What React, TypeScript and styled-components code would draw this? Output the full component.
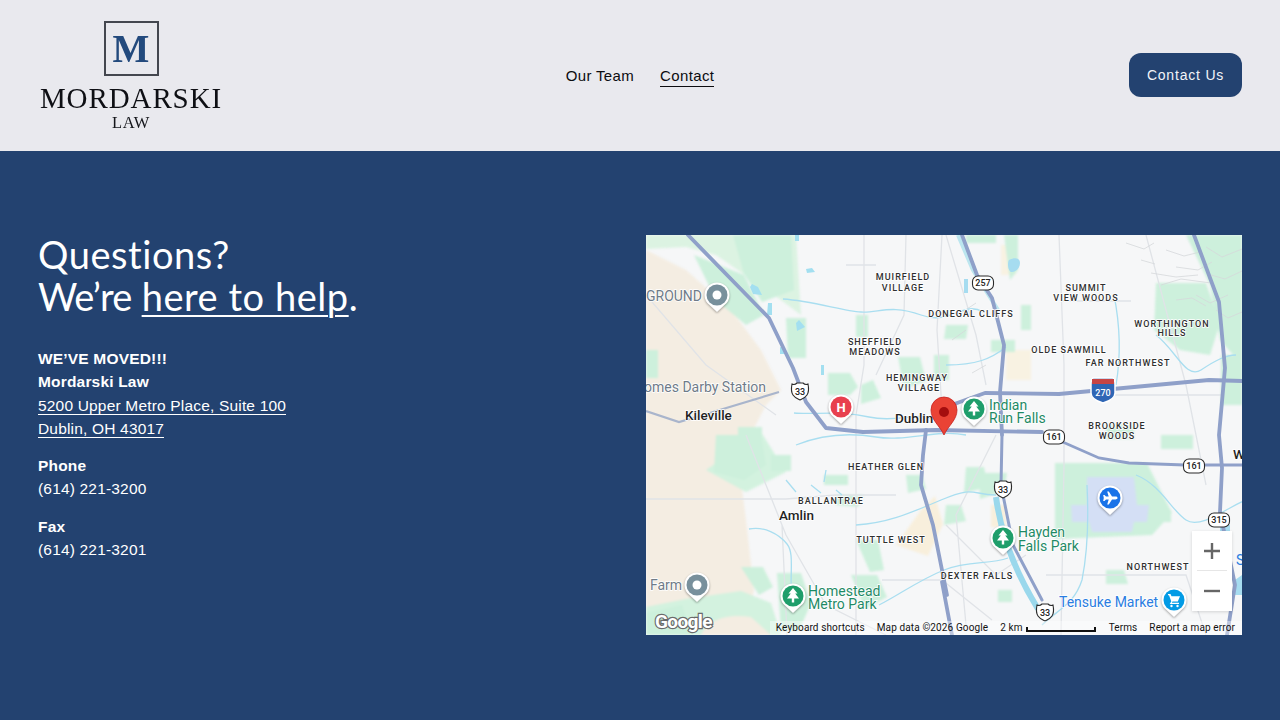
import React from "react";
import styled, { createGlobalStyle } from "styled-components";

const Global = createGlobalStyle`
  html, body { margin: 0; padding: 0; background: #234270; }
  body { font-family: "Liberation Sans", Arial, sans-serif; overflow: hidden; }
  #root { width: 1280px; height: 720px; }
`;

const Page = styled.div`
  width: 1280px;
  height: 720px;
  display: flex;
  flex-direction: column;
  background: #234270;
`;
const Header = styled.header`
  height: 151px;
  box-sizing: border-box;
  padding: 0 38px;
  background: #e9e9ee;
  display: grid;
  grid-template-columns: 1fr auto 1fr;
  align-items: center;
`;
const Logo = styled.a`
  width: 186px;
  display: flex;
  flex-direction: column;
  align-items: center;
  filter: blur(0.4px);
`;
const LogoBox = styled.div`
  width: 55px;
  height: 55px;
  box-sizing: border-box;
  border: 2px solid #44474f;
  display: flex;
  align-items: center;
  justify-content: center;
  font: 700 39px/1 "Liberation Serif", serif;
  color: #234a7d;
`;
const LogoName = styled.div`
  margin-top: 7px;
  font: 400 29px/30px "Liberation Serif", serif;
  letter-spacing: 0.9px;
  color: #0e0f14;
  white-space: nowrap;
`;
const LogoSub = styled.div`
  margin-top: 1px;
  font: 400 16.5px/17px "Liberation Serif", serif;
  letter-spacing: 0.6px;
  color: #14151a;
`;
const Nav = styled.nav`
  display: flex;
  gap: 26px;
  align-items: center;
  margin-top: 2px;
`;
const NavLink = styled.a<{ $active?: boolean }>`
  font-size: 15px;
  line-height: 20px;
  letter-spacing: 0.35px;
  color: #0c0c10;
  border-bottom: 1px solid ${(p) => (p.$active ? "#0c0c10" : "transparent")};
`;
const ContactButton = styled.a`
  justify-self: end;
  width: 113px;
  height: 44px;
  margin-bottom: 2px;
  display: flex;
  align-items: center;
  justify-content: center;
  border-radius: 12px;
  background: #234270;
  color: #f2f4f8;
  font-size: 14px;
  letter-spacing: 0.8px;
`;
const Main = styled.main`
  flex: 1;
  padding: 84px 38px 0;
  display: flex;
  justify-content: space-between;
  align-items: flex-start;
`;
const Info = styled.section`
  color: #fff;
`;
const Heading = styled.h1`
  margin: -2px 0 30px;
  font: 400 38px/42px Lato, sans-serif;
  letter-spacing: 0.55px;
  color: #fff;
`;
const Contraction = styled.span`
  letter-spacing: -0.9px;
`;
const HeadingLink = styled.a`
  text-decoration: underline;
  text-decoration-thickness: 2px;
  text-underline-offset: 4px;
`;
const Block = styled.p`
  margin: 0 0 14px;
  font-size: 15.5px;
  line-height: 23.3px;
  letter-spacing: 0.18px;
`;
const Strong = styled.strong`
  font-weight: 700;
  display: block;
`;
const Address = styled.a`
  color: #fff;
  border-bottom: 1px solid #fff;
`;
const MapFrame = styled.div`
  position: relative;
  width: 596px;
  height: 400px;
  overflow: hidden;
  background: #f6f7f8;
`;
const MapArt = styled.svg`
  display: block;
`;
const SoftLayer = styled.g`
  filter: blur(1.2px);
`;
const PinShape = styled.path`
  filter: drop-shadow(0 1px 1px rgba(0, 0, 0, 0.35));
`;
const Zoom = styled.div`
  position: absolute;
  left: 546px;
  top: 296px;
  width: 40px;
  height: 80px;
  background: #fff;
  display: flex;
  flex-direction: column;
  align-items: center;
  box-shadow: 0 1px 3px rgba(0, 0, 0, 0.15);
`;
const ZoomKey = styled.div<{ $h: number }>`
  height: ${(p) => p.$h}px;
  width: 100%;
  display: flex;
  align-items: center;
  justify-content: center;
`;
const ZoomRule = styled.div`
  width: 30px;
  height: 1px;
  background: #e6e6e6;
`;
const Attribution = styled.div`
  position: absolute;
  right: 0;
  bottom: 0;
  height: 14px;
  padding: 0 7px 0 6px;
  display: flex;
  align-items: center;
  font: 400 10px/14px Roboto, sans-serif;
  letter-spacing: 0.12px;
  color: #111;
  white-space: nowrap;
  background: rgba(255, 255, 255, 0.4);
`;
const AttrItem = styled.span<{ $gap: number }>`
  margin-right: ${(p) => p.$gap}px;
`;
const Scale = styled.span`
  width: 66px;
  height: 3px;
  margin: 0 13px 0 3px;
  border: 2px solid #111;
  border-top: 0;
  position: relative;
  top: 1px;
`;

const Shield = ({ x, y, t, w = 21 }: { x: number; y: number; t: string; w?: number }) => (
  <g>
    <rect x={x - w / 2} y={y - 7} width={w} height={14} rx={5.5} fill="#fff" stroke="#2b2b2b" strokeWidth={1.1} />
    <text x={x} y={y + 3.2} textAnchor="middle" fontFamily="Roboto" fontSize="9" fontWeight="500" fill="#222">{t}</text>
  </g>
);
const UsShield = ({ x, y }: { x: number; y: number }) => (
  <g>
    <path d={`M${x - 8} ${y - 7}c2 1 3 1 5-1h6c2 2 3 2 5 1 1 5 1 8-1 11-2 3-5 4-7 5-2-1-5-2-7-5-2-3-2-6-1-11z`} fill="#fff" stroke="#2b2b2b" strokeWidth={1.1} />
    <text x={x} y={y + 4} textAnchor="middle" fontFamily="Roboto" fontSize="9" fontWeight="500" fill="#222">33</text>
  </g>
);
const Pin = ({ x, y, c, children }: { x: number; y: number; c: string; children?: React.ReactNode }) => (
  <g transform={`translate(${x} ${y})`}>
    <PinShape d="M0 17 L-8 9.5 A12.5 12.5 0 1 1 8 9.5 Z" fill="#fff" />
    <circle r={10.5} fill={c} />
    {children}
  </g>
);
const Tree = () => <path d="M0-8l4.500 5.500H2.200l3.800 5H1.200V6.500h-2.400V2.500H-6l3.800-5h-2.300z" fill="#fff" />;

const labels: [number, number, string][] = [
  [257, 45, "MUIRFIELD"], [257, 56, "VILLAGE"], [325, 82, "DONEGAL CLIFFS"],
  [229, 110, "SHEFFIELD"], [229, 120, "MEADOWS"], [271, 146, "HEMINGWAY"], [273, 156, "VILLAGE"],
  [440, 56, "SUMMIT"], [440, 66, "VIEW WOODS"], [526, 92, "WORTHINGTON"], [526, 101, "HILLS"],
  [423, 118, "OLDE SAWMILL"], [482, 131, "FAR NORTHWEST"], [471, 194, "BROOKSIDE"], [471, 204, "WOODS"],
  [240, 235, "HEATHER GLEN"], [185, 269, "BALLANTRAE"], [245, 308, "TUTTLE WEST"],
  [331, 344, "DEXTER FALLS"], [512, 335, "NORTHWEST"],
];
const greens: string[] = [
  "M87 0h58l3 55-32 12-18-28z",
  "M140 83h20v40h-18z",
  "M48 20l50 20 20 40-18 10-30-25z",
  "M0 115h12v28H0z",
  "M182 138h22l8 14-8 8h-22z",
  "M215 150l12-5 8 18-20 6z",
  "M210 80h12v22h-12z",
  "M252 122h22l6 24-22 8z",
  "M300 90h22l-2 14h-22z",
  "M288 120h15v25h-15z",
  "M345 105h24v12h-24z",
  "M320 0h30v8h-30z",
  "M375 70h10v25h-10z",
  "M358 0h14v35l-8 10z",
  "M510 48h50l14 40-10 32-30-5-26-20z",
  "M540 0h56v130l-22-25-10-55z",
  "M575 120h21v50h-21z",
  "M70 200h45l5 30-22 15-30-8z",
  "M92 200h24v-8H92z",
  "M131 338h24l10 30-12 28h-18z",
  "M210 305h22l6 30-14 2z",
  "M0 378l36-8 10 30H0z",
  "M95 332h22l10 20-14 8z",
  "M205 340h26l10 22-22 12z",
  "M320 232h18l4 20-24 6zM300 270h15l5 16-22 4z",
  "M333 238h28l-3 18-24 8z",
  "M409 228h92l25 50-20 22-97 4z",
  "M515 200h32v14h-32z",
  "M505 275h20v12h-20z",
  "M260 240h16l4 14-18 4z",
  "M125 220h20v16h-20z",
  "M178 240h24v10h-24z",
  "M190 260h28l-6 12-22-2z",
  "M460 190h28v14h-28z",
  "M460 335h18l4 14h-22z",
  "M352 355h14v12h-14z",
];
const waters: string[] = [
  "M137 64c30 2 60 12 78 13s30-8 60 3 42-15 62-3",
  "M148 178c20 2 45-3 75 4s50-8 70 5",
  "M150 210c25-10 50-13 80-8s60-8 90-2",
  "M103 294c15-3 30 5 38 15s2 30 5 60",
  "M210 290c30-2 50-10 85-25s30-5 55-5",
  "M233 370c20-10 40-25 65-35s45-5 64-12",
  "M468 60c5 25 8 55 2 90",
  "M441 250c2 40 0 70-5 95-8 25-25 30-40 45",
  "M490 240c25 10 35 35 50 45s45-15 60-20",
  "M510 100c20 15 30 45 45 35s25-15 35-15",
  "M300 130c30 0 45-6 60-18",
  "M165 250l10 8M140 245l10 12M180 235l-2 12M190 255l6 5",
];
const hills: string[] = [
  "M520 15l18 6 16-4", "M530 32l22 3 14-8", "M505 38l25 4 22-2", "M515 50l20-6 30 4", "M560 12l16 10 20-8",
  "M565 40l14 4 17-8", "M550 60l14 8 18-8", "M530 65l16-2 14 8", "M570 75l12 8 14-6", "M540 85l14 6 10-4",
  "M480 8l18 6 10-6", "M330 68l-18 12", "M320 95l-14 10", "M340 130l-14 8", "M495 25l14 4",
];

const App = () => (
  <Page>
    <Global />
    <Header>
      <Logo>
        <LogoBox>M</LogoBox>
        <LogoName>MORDARSKI</LogoName>
        <LogoSub>LAW</LogoSub>
      </Logo>
      <Nav>
        <NavLink>Our Team</NavLink>
        <NavLink $active>Contact</NavLink>
      </Nav>
      <ContactButton>Contact Us</ContactButton>
    </Header>
    <Main>
      <Info>
        <Heading>
          Questions?<br /><Contraction>We’re</Contraction> <HeadingLink>here to help</HeadingLink>.
        </Heading>
        <Block>
          <Strong>WE’VE MOVED!!!</Strong>
          <Strong>Mordarski Law</Strong>
          <Address>5200 Upper Metro Place, Suite 100</Address><br />
          <Address>Dublin, OH 43017</Address>
        </Block>
        <Block>
          <Strong>Phone</Strong>
          (614) 221-3200
        </Block>
        <Block>
          <Strong>Fax</Strong>
          (614) 221-3201
        </Block>
      </Info>
      <MapFrame>
        <MapArt width="596" height="400" viewBox="0 0 596 400">
          <rect width="596" height="400" fill="#f6f7f8" />
          <SoftLayer>
            <path d="M0 15l40 20 45 40 30 40 20 40-15 15-18 35-7 40 5 40 8 70-10 45H0z" fill="#f4ede2" />
            <path d="M0 0h150l5 80-20-15L70 20 40 12 0 14z" fill="#dcf3e2" />
            <path d="M60 235l55-38 25 40-40 20z" fill="#d3f2df" />
            <path d="M0 372l40-8 55-8 30 12 10 32H0z" fill="#d3f2df" />
            <path d="M55 400c5-14 25-22 50-18l20 18z" fill="#f4ede2" />
            <path d="M250 310l25-35 14-14 8 28-15 32zM345 270h15v22h-15z" fill="#f8efdc" />
            <path d="M355 10h15v30h-15zM360 115h25v30h-25z" fill="#f8f2e2" />
            <g fill="#cdf0dc">
              {greens.map((d, i) => <path key={i} d={d} />)}
            </g>
            <path d="M441 242h47l3 28h12l-2 17h-13l-2 10h-40l-3-10h-17l-1-17h16z" fill="#d4dff5" />
          </SoftLayer>
          <g stroke="#e0e3e7" strokeWidth="1.300" fill="none">
            <path d="M0 264h140l50-4h60M100 200l40 100 40 70 60 30M136 290l5 110M218 0v130l-8 50v220M260 0l-2 80-28 60" />
            <path d="M0 60l60 70 70 50M413 0l5 130 0 100-3 170M500 0l40 150 20 100M456 160h120M300 0l30 100 10 50M236 345h60l50 40" />
            <path d="M300 290l50 50 30-20M400 340h140l20 60M350 200l-40 80 10 110M296 0l-5 95 5 80M200 30h30M415 66h70" />
          </g>
          <g stroke="#d6d8da" strokeWidth=".8" fill="none">
            {hills.map((d, i) => <path key={i} d={d} />)}
          </g>
          <g stroke="#a9def0" strokeWidth="1.300" fill="none">
            {waters.map((d, i) => <path key={i} d={d} />)}
          </g>
          <g fill="#a3dff0">
            <path d="M106 49l6 3 4 8-9-1-3-7zM122 68l4 0 0 12-5 0zM150 88l3-3 6 7-8 4zM134 112l4 1 2 6-6 0zM175 130h3v10h-3zM149 0h4v6h-4zM160 34l6-1 3 4-8 1z" />
            <path d="M363 25c6-3 11-2 11 3s-4 9-8 9-5-9-3-12zM318 44h4v14h-4z" fill="#a6dcf0" />
            <path d="M574 290h10v34h-10z" fill="#a6dcf0" />
            <path d="M589 345l7-5v20h-7z" fill="#a6dcf0" />
          </g>
          <path d="M350 262c4 30 16 70 42 112" stroke="#9ad8ec" strokeWidth="6" fill="none" />
          <path d="M312 0l15 35 25 40" stroke="#bce6ef" strokeWidth="4" fill="none" />
          <path d="M0 176l33 11 34-10 66-20" stroke="#a9b5cc" strokeWidth="2.200" fill="none" />
          <g stroke="#8fa0c9" strokeWidth="3.800" fill="none" strokeLinejoin="round" strokeLinecap="round">
            <path d="M42 0l81 83 24 50 13 34 20 26 37 4 73-2 106 2" />
            <path d="M300 172l39-14 74 1 43-4 107-10 33 1" />
            <path d="M316 0l15 40 15 23 12 47-4 47 2 43" />
            <path d="M280 195l-3 25-2 30 12 40 14 70" />
            <path d="M356 200l-1 50 12 60 29 55" strokeWidth="3" />
            <path d="M548 0l25 67 6 66-6 67 3 33-2 44 15 73-8 50" />
            <path d="M296 347l10 53" />
          </g>
          <path d="M409 205l10 3 34 15 30 5 56 2h57" stroke="#8fa0c9" strokeWidth="2.800" fill="none" />
          <Shield x={337} y={48} t="257" />
          <UsShield x={154} y={156} />
          <UsShield x={357} y={254} />
          <UsShield x={399} y={377} />
          <Shield x={408} y={202} t="161" />
          <Shield x={548} y={231} t="161" />
          <Shield x={573} y={285} t="315" />
          <g>
            <path d="M445 150c0-4 0-6 2-7h20c2 1 2 3 2 7v8c0 5-5 8-12 10-7-2-12-5-12-10z" fill="#2f66b5" stroke="#fff" strokeWidth="1.500" />
            <path d="M446 144h22v5h-22z" fill="#c84545" />
            <text x={457} y={161} textAnchor="middle" fontFamily="Roboto" fontSize="9" fontWeight="500" fill="#fff">270</text>
          </g>
          <g fontFamily="Roboto" fontSize="9" fontWeight="500" letterSpacing="1" fill="#2f2f2f" textAnchor="middle" stroke="#fff" strokeWidth="1.500" paintOrder="stroke">
            {labels.map(([x, y, t]) => <text key={t + y} x={x} y={y}>{t}</text>)}
          </g>
          <g fontFamily="Roboto" fontSize="14" fill="#6f7b88" stroke="#fff" strokeWidth="1.500" paintOrder="stroke">
            <text x={0} y={66}>GROUND</text>
            <text x={-2} y={157}>omes Darby Station</text>
            <text x={4} y={355}>Farm</text>
          </g>
          <g fontFamily="Roboto" fontSize="13.500" fontWeight="500" fill="#1f1f1f" stroke="#fff" strokeWidth="1.500" paintOrder="stroke">
            <text x={39} y={185}>Kileville</text>
            <text x={249} y={188}>Dublin</text>
            <text x={133} y={285}>Amlin</text>
            <text x={587} y={224}>W</text>
          </g>
          <g fontFamily="Roboto" fontSize="14" fill="#1e8a66" stroke="#fff" strokeWidth="1.500" paintOrder="stroke">
            <text x={343} y={175}>Indian</text>
            <text x={343} y={188}>Run Falls</text>
            <text x={162} y={361}>Homestead</text>
            <text x={162} y={374}>Metro Park</text>
            <text x={372} y={302}>Hayden</text>
            <text x={372} y={316}>Falls Park</text>
          </g>
          <text x={413} y={372} fontFamily="Roboto" fontSize="14" fill="#2a7de1" stroke="#fff" strokeWidth="1.500" paintOrder="stroke">Tensuke Market</text>
          <text x={590} y={330} fontFamily="Roboto" fontSize="14" fill="#2a7de1">Sa</text>
          <Pin x={71} y={60} c="#78909c"><circle r={4.500} fill="#fff" /></Pin>
          <Pin x={51} y={350} c="#78909c"><circle r={4.500} fill="#fff" /></Pin>
          <Pin x={195} y={172} c="#e8404e">
            <text x={0} y={5} textAnchor="middle" fontFamily="Roboto" fontSize="13" fontWeight="700" fill="#fff">H</text>
          </Pin>
          <Pin x={328} y={174} c="#1f9e6b"><Tree /></Pin>
          <Pin x={147} y={361} c="#1f9e6b"><Tree /></Pin>
          <Pin x={357} y={303} c="#1f9e6b"><Tree /></Pin>
          <Pin x={464} y={263} c="#1a73e8">
            <path d="M7.500 0c0-1-1-1.400-2-1.400H2L-1.200-6.500h-1.600L-1.300-1.400H-4L-5.500-3H-6.800L-6.200 0-6.800 3H-5.500L-4 1.400h2.700L-2.800 6.500h1.600L2 1.400h3.500C6.500 1.400 7.500 1 7.500 0z" fill="#fff" />
          </Pin>
          <Pin x={528} y={365} c="#039be5">
            <path d="M-6-6h2.500l1 2.200H6l-2.200 5.200H-1.500l-.7 1.300H5v1.300H-4.300L-2.700 1.500-5-4.700H-6z" fill="#fff" />
            <circle cx={-2.500} cy={6} r={1.200} fill="#fff" /><circle cx={3.500} cy={6} r={1.200} fill="#fff" />
          </Pin>
          <g transform="translate(298 181)">
            <path d="M0 19C-4 10-13 4-13-6A13 13 0 1 1 13-6C13 4 4 10 0 19Z" fill="#ea4335" stroke="#c5221f" strokeWidth=".8" />
            <circle cy={-4} r={5} fill="#a50e0e" />
          </g>
          <text x={9} y={393} fontFamily="Roboto" fontSize="19" fontWeight="700" letterSpacing="-0.6" fill="#fff" stroke="#6a6a6a" strokeWidth="2.400" paintOrder="stroke">Google</text>
        </MapArt>
        <Zoom>
          <ZoomKey $h={39}>
            <svg width="18" height="18" viewBox="0 0 18 18"><path d="M9 1v16M1 9h16" stroke="#666" strokeWidth="2.400" /></svg>
          </ZoomKey>
          <ZoomRule />
          <ZoomKey $h={40}>
            <svg width="18" height="18" viewBox="0 0 18 18"><path d="M1 9h16" stroke="#666" strokeWidth="2.400" /></svg>
          </ZoomKey>
        </Zoom>
        <Attribution>
          <AttrItem $gap={12}>Keyboard shortcuts</AttrItem>
          <AttrItem $gap={12}>Map data ©2026 Google</AttrItem>
          <span>2 km</span>
          <Scale />
          <AttrItem $gap={12}>Terms</AttrItem>
          <span>Report a map error</span>
        </Attribution>
      </MapFrame>
    </Main>
  </Page>
);

export default App;
